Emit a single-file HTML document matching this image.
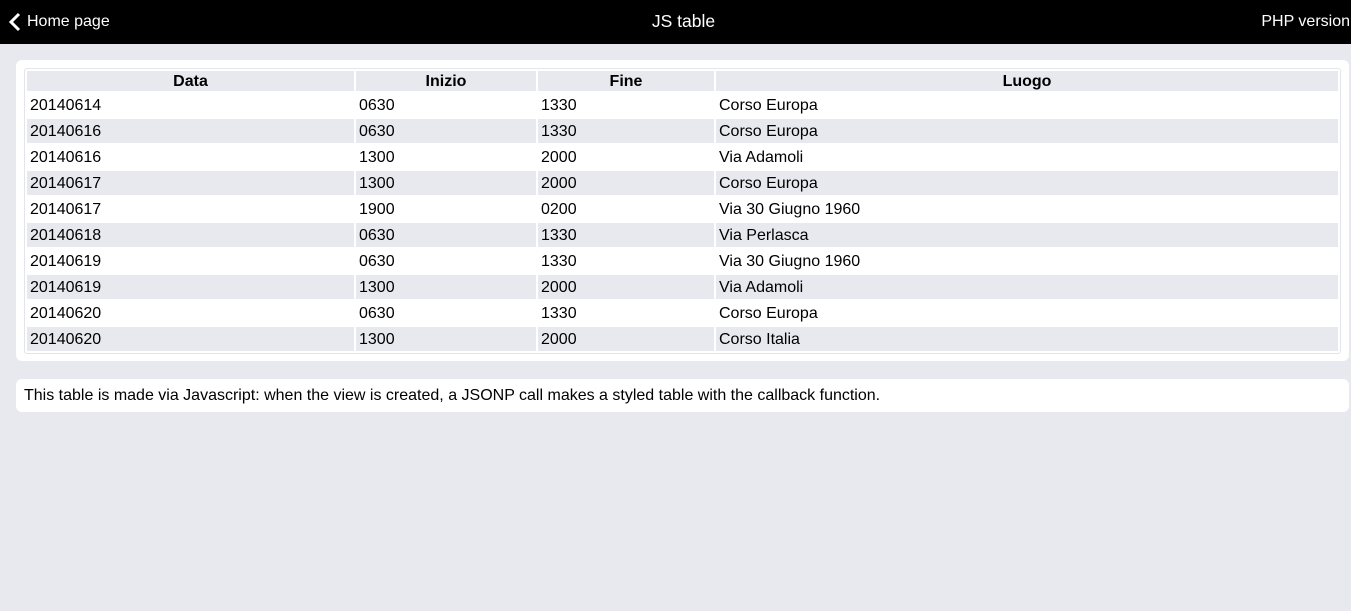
<!DOCTYPE html>
<html><head><style>
body{margin:0;width:1351px;height:611px;background:#e8e9ee;font-family:"Liberation Sans",sans-serif;font-size:16px;color:#000;overflow:hidden}
.hdr{height:44px;background:#000;color:#fff;position:relative}
.hdr span{position:absolute;top:13px;font-size:16px}
.panel{position:absolute;left:16px;width:1333px;background:#fff;border-radius:6px}
table{position:absolute;left:8px;top:8px;width:1317px;border:1px solid #e4e5ea;border-spacing:2px;border-radius:3px}
td,th{padding:1px 0 0 3px;height:23px;text-align:left;font-weight:normal}
th{height:19px;background:#e8e9ee;font-weight:bold;text-align:center;padding:1px 0 0 0}
tr:nth-child(odd) td{background:#e8e9ee}
</style></head><body>
<div class="hdr">
<svg style="position:absolute;left:8px;top:12px" width="14" height="20" viewBox="0 0 14 20"><path d="M11 2 L3 10 L11 18" stroke="#fff" stroke-width="3" fill="none"/></svg>
<span style="left:27px">Home page</span>
<span style="left:0;right:0;text-align:center;padding-left:16px;font-size:17.5px;top:11px">JS table</span>
<span style="right:1px">PHP version</span>
</div>
<div class="panel" style="top:60px;height:301px">
<table>
<tr><th style="width:327px">Data</th><th style="width:180px">Inizio</th><th style="width:176px">Fine</th><th>Luogo</th></tr>
<tr><td>20140614</td><td>0630</td><td>1330</td><td>Corso Europa</td></tr>
<tr><td>20140616</td><td>0630</td><td>1330</td><td>Corso Europa</td></tr>
<tr><td>20140616</td><td>1300</td><td>2000</td><td>Via Adamoli</td></tr>
<tr><td>20140617</td><td>1300</td><td>2000</td><td>Corso Europa</td></tr>
<tr><td>20140617</td><td>1900</td><td>0200</td><td>Via 30 Giugno 1960</td></tr>
<tr><td>20140618</td><td>0630</td><td>1330</td><td>Via Perlasca</td></tr>
<tr><td>20140619</td><td>0630</td><td>1330</td><td>Via 30 Giugno 1960</td></tr>
<tr><td>20140619</td><td>1300</td><td>2000</td><td>Via Adamoli</td></tr>
<tr><td>20140620</td><td>0630</td><td>1330</td><td>Corso Europa</td></tr>
<tr><td>20140620</td><td>1300</td><td>2000</td><td>Corso Italia</td></tr>
</table>
</div>
<div class="panel" style="top:379px;height:33px">
<div style="position:absolute;left:8px;top:8px">This table is made via Javascript: when the view is created, a JSONP call makes a styled table with the callback function.</div>
</div>
</body></html>
